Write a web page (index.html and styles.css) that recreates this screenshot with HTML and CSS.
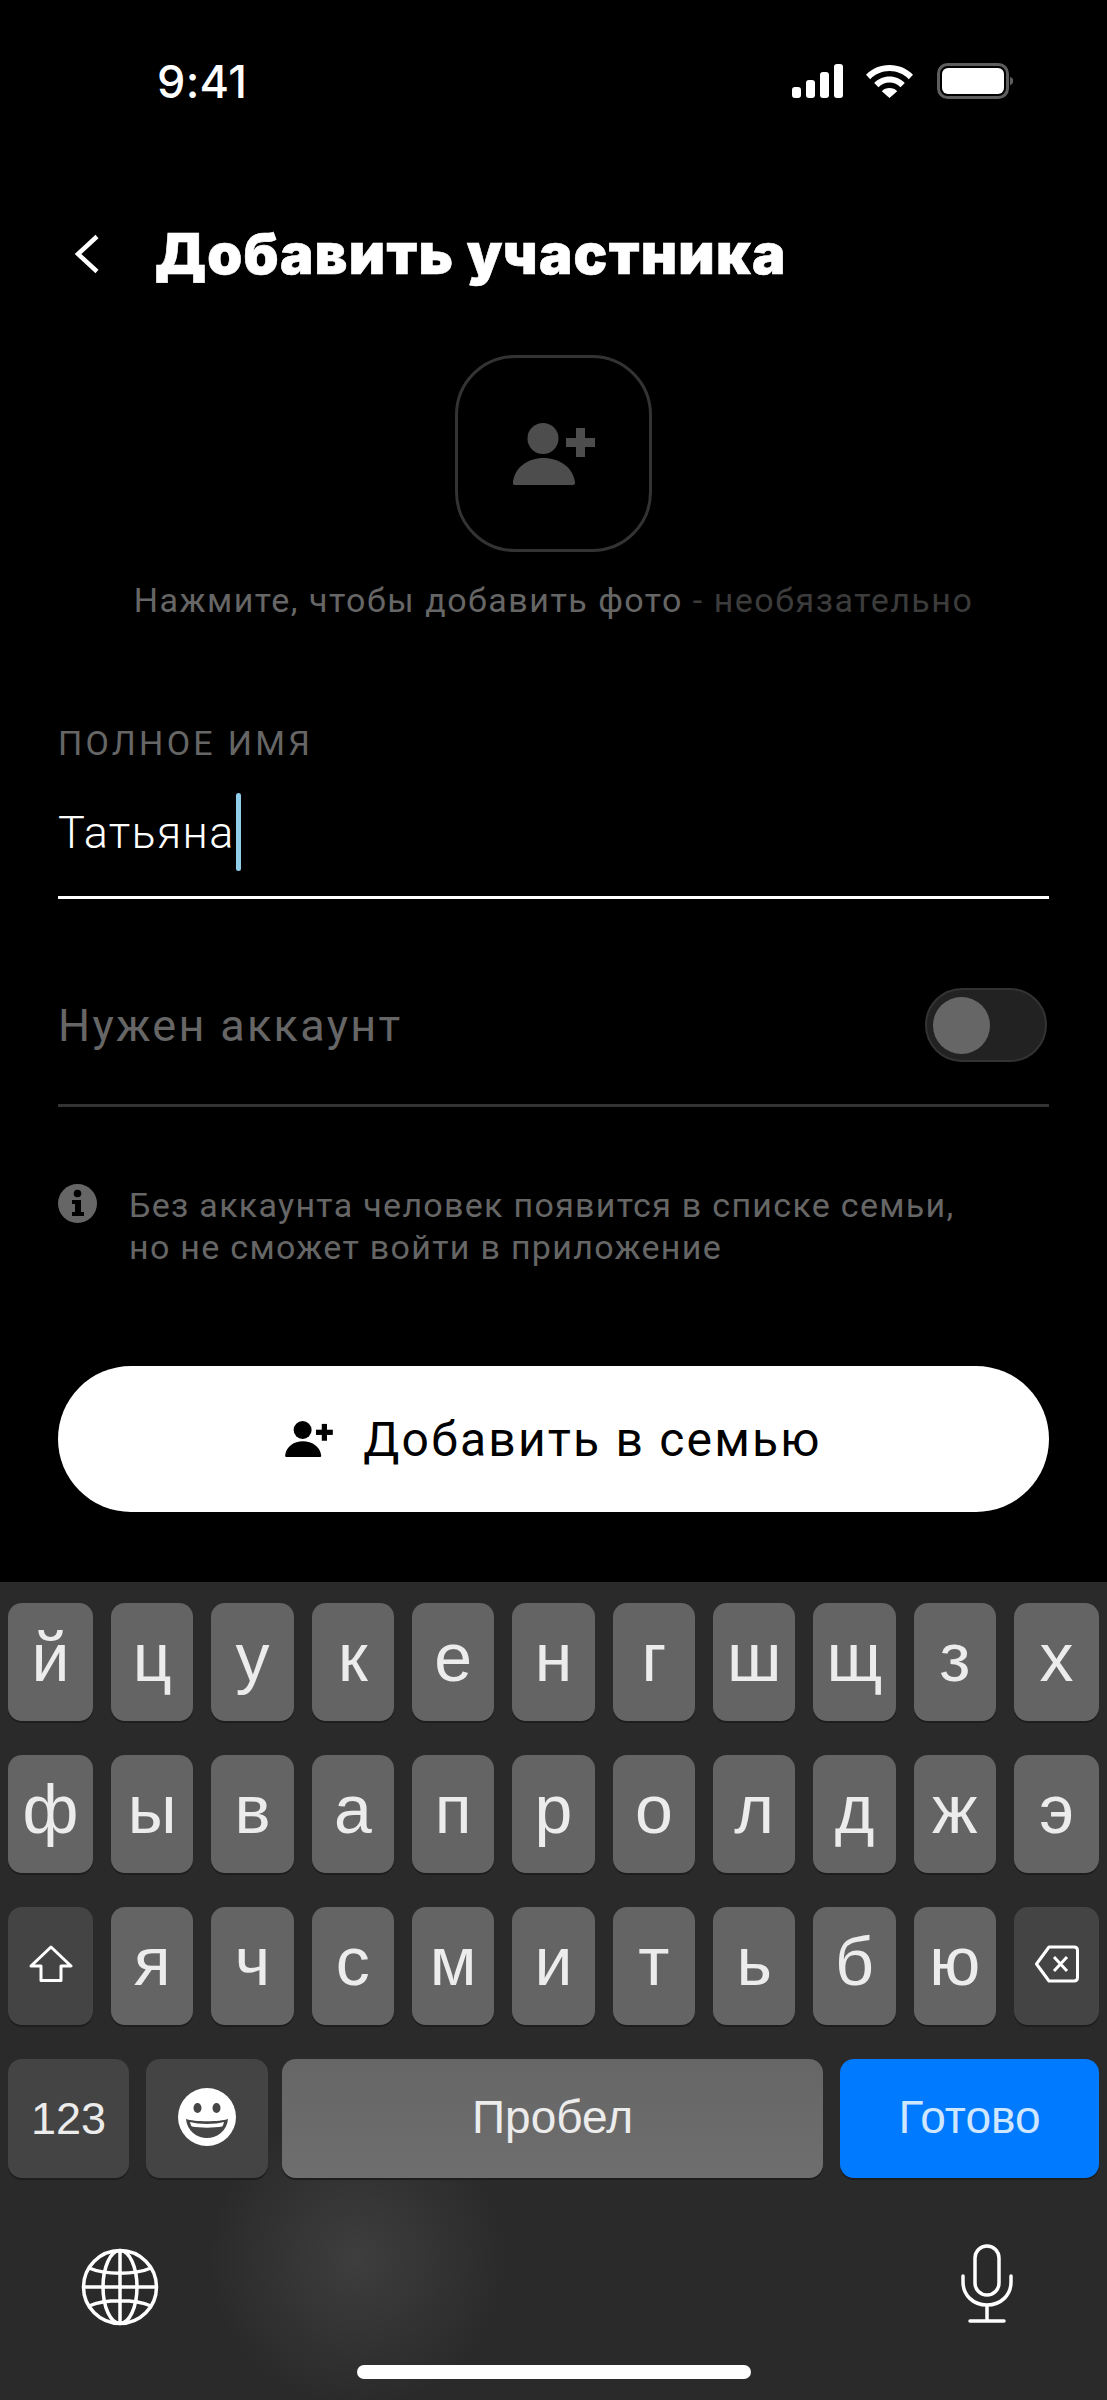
FILE: index.html
```html
<!DOCTYPE html>
<html lang="ru">
<head>
<meta charset="utf-8">
<title>Добавить участника</title>
<link rel="stylesheet" href="styles.css">
</head>
<body>
<div class="screen">
  <div class="status">
    <span class="time">9:41</span>
    <div class="status-icons">
      <svg class="ic-signal" viewBox="0 0 51 34"><rect x="0" y="23" width="9" height="11" rx="3"/><rect x="14" y="16" width="9" height="18" rx="3"/><rect x="28" y="8" width="9" height="26" rx="3"/><rect x="42" y="0" width="9" height="34" rx="3"/></svg>
      <svg class="ic-wifi" viewBox="0 0 47 33"><path d="M23.5 0C33 0 41 3.600 47 9.800L42.800 14.200C37.800 9 31 6 23.500 6S9.200 9 4.200 14.200L0 9.800C6 3.600 14 0 23.500 0Z"/><path d="M23.500 11.500C29.500 11.500 35 14 38.800 18L34.500 22.300C31.700 19.300 27.800 17.500 23.500 17.500S15.300 19.300 12.500 22.300L8.200 18C12 14 17.500 11.500 23.500 11.500Z"/><path d="M23.500 23C26.500 23 29.300 24.200 31.200 26.200L23.500 33L15.800 26.200C17.700 24.200 20.500 23 23.500 23Z"/></svg>
      <svg class="ic-battery" viewBox="0 0 76 36"><rect x="1.500" y="1.500" width="69" height="33" rx="9" fill="none" stroke="#5e5e5e" stroke-width="3"/><rect x="5" y="5" width="62" height="26" rx="6" fill="#fff"/><path d="M73 13.500L76 16V20L73 22.500Z" fill="#5e5e5e"/></svg>
    </div>
  </div>

  <div class="header">
    <svg class="back" viewBox="0 0 26 40"><path d="M23 2.500L4 20L23 37.500" fill="none" stroke="#fff" stroke-width="4.500"/></svg>
    <h1 class="title">Добавить участника</h1>
  </div>

  <div class="avatar">
    <svg class="avatar-icon" viewBox="0 0 82 62"><circle cx="30" cy="15.500" r="15.500"/><path d="M0 59C2 44 15 35 30.500 35C46 35 60 44 62 59Q62.500 62 60 62H2Q-.5 62 0 59Z"/><rect x="53" y="15" width="29" height="9"/><rect x="63" y="5" width="9" height="29"/></svg>
  </div>
  <p class="caption">Нажмите, чтобы добавить фото <span class="caption-dim">- необязательно</span></p>

  <div class="form">
    <div class="label">ПОЛНОЕ ИМЯ</div>
    <div class="input"><span class="input-text">Татьяна</span><span class="caret"></span></div>
    <div class="toggle-row">
      <span class="toggle-label">Нужен аккаунт</span>
      <span class="toggle"><span class="knob"></span></span>
    </div>
    <div class="note">
      <svg class="note-icon" viewBox="0 0 39 39"><circle cx="19.500" cy="19.500" r="19.500" fill="#666"/><circle cx="19.500" cy="9.500" r="3.800" fill="#000"/><path d="M14 16H23V28H26V32H14V28H17V20H14Z" fill="#000"/></svg>
      <p class="note-text">Без аккаунта человек появится в списке семьи,<br>но не сможет войти в приложение</p>
    </div>
    <div class="cta">
      <svg class="cta-icon" viewBox="0 0 82 62"><circle cx="30" cy="15.500" r="15.500"/><path d="M0 59C2 44 15 35 30.500 35C46 35 60 44 62 59Q62.500 62 60 62H2Q-.5 62 0 59Z"/><rect x="53" y="15" width="29" height="9"/><rect x="63" y="5" width="9" height="29"/></svg>
      <span>Добавить в семью</span>
    </div>
  </div>

  <div class="keyboard">
    <div class="row">
      <span class="key">й</span><span class="key">ц</span><span class="key">у</span><span class="key">к</span><span class="key">е</span><span class="key">н</span><span class="key">г</span><span class="key">ш</span><span class="key">щ</span><span class="key">з</span><span class="key">х</span>
    </div>
    <div class="row">
      <span class="key">ф</span><span class="key">ы</span><span class="key">в</span><span class="key">а</span><span class="key">п</span><span class="key">р</span><span class="key">о</span><span class="key">л</span><span class="key">д</span><span class="key">ж</span><span class="key">э</span>
    </div>
    <div class="row">
      <span class="key key-dark"><svg class="ic-shift" viewBox="0 0 44 38"><path d="M22 2L42 21H32V35.500H12V21H2Z" fill="none" stroke="#fff" stroke-width="3" stroke-linejoin="round"/></svg></span>
      <span class="key">я</span><span class="key">ч</span><span class="key">с</span><span class="key">м</span><span class="key">и</span><span class="key">т</span><span class="key">ь</span><span class="key">б</span><span class="key">ю</span>
      <span class="key key-dark"><svg class="ic-delete" viewBox="0 0 44 38"><path d="M14 2H39Q42.500 2 42.500 5.500V32.500Q42.500 36 39 36H14L1.500 19Z" fill="none" stroke="#fff" stroke-width="3" stroke-linejoin="round"/><path d="M19 12L32 26M32 12L19 26" stroke="#fff" stroke-width="3" fill="none"/></svg></span>
    </div>
    <div class="row-bottom">
      <span class="key key-dark key-123">123</span>
      <span class="key key-dark key-emoji"><svg class="ic-emoji" viewBox="0 0 58 58"><circle cx="29" cy="29" r="29" fill="#fff"/><ellipse cx="19.500" cy="20" rx="4" ry="5" fill="#464646"/><ellipse cx="38.500" cy="20" rx="4" ry="5" fill="#464646"/><path d="M8 31C16 34 42 34 50 31C49 43 39 50 29 50S9 43 8 31Z" fill="#464646"/><path d="M12 34C20 36.500 38 36.500 46 34C45.500 36 45 37.500 44.200 38.500C36 40 22 40 13.800 38.500C13 37.500 12.500 36 12 34Z" fill="#fff"/></svg></span>
      <span class="key key-space">Пробел</span>
      <span class="key key-done">Готово</span>
    </div>
    <div class="kb-tools">
      <svg class="ic-globe" viewBox="0 0 78 78"><g fill="none" stroke="#fff" stroke-width="3.500"><circle cx="39" cy="39" r="36.500"/><ellipse cx="39" cy="39" rx="17" ry="36.500"/><path d="M39 2.500V75.500M2.500 39H75.500M8 20C24 27 54 27 70 20M8 58C24 51 54 51 70 58"/></g></svg>
      <svg class="ic-mic" viewBox="0 0 52 80"><g fill="none" stroke="#fff" stroke-width="3.500" stroke-linecap="round"><rect x="14" y="2" width="24" height="49" rx="12"/><path d="M2 32V38C2 51 12 61 26 61S50 51 50 38V32M26 61V77M9 77H43"/></g></svg>
    </div>
    <div class="home-bar"></div>
  </div>
</div>
</body>
</html>
```
FILE: styles.css
```css
* { box-sizing: border-box; }
html, body { margin: 0; padding: 0; background: #000; }
.screen {
  width: 1107px;
  height: 2400px;
  overflow: hidden;
  background: #000;
  font-family: Roboto, "Liberation Sans", sans-serif;
  color: #fff;
  display: flex;
  flex-direction: column;
}
.status {
  height: 162px;
  flex: none;
  display: flex;
  align-items: center;
  justify-content: space-between;
  padding: 0 94px 0 157px;
}
.time { font-family: Inter, sans-serif; font-size: 45px; font-weight: 500; letter-spacing: 0.3px; }
.status-icons { display: flex; align-items: center; }
.ic-signal { width: 51px; height: 34px; fill: #fff; }
.ic-wifi { width: 47px; height: 33px; fill: #fff; margin-left: 23px; }
.ic-battery { width: 76px; height: 36px; margin-left: 24px; }

.header {
  height: 184px;
  flex: none;
  display: flex;
  align-items: center;
  padding-left: 74px;
}
.back { width: 26px; height: 40px; }
.title {
  margin: 0 0 0 55px;
  font-family: Inter, sans-serif;
  font-size: 56px;
  font-weight: 900;
  line-height: 1;
  letter-spacing: 1.3px;
  -webkit-text-stroke: 0.6px #fff;
}
.avatar {
  width: 197px;
  height: 197px;
  flex: none;
  margin: 9px 0 0 455px;
  border: 3px solid #333;
  border-radius: 60px;
  display: flex;
  align-items: center;
  justify-content: center;
}
.avatar-icon { width: 82px; height: 62px; fill: #4d4d4d; }
.caption {
  margin: 28px 0 0;
  height: 40px;
  text-align: center;
  font-size: 34px;
  line-height: 40px;
  letter-spacing: 1.5px;
  color: #666;
}
.caption-dim { color: #3c3c3c; }

.form { padding: 0 58px; }
.label {
  margin-top: 103px;
  height: 40px;
  font-size: 34px;
  line-height: 40px;
  letter-spacing: 3.3px;
  color: #666;
}
.input {
  display: flex;
  align-items: center;
  padding: 30px 0 25px;
  border-bottom: 3px solid #fff;
}
.input-text { font-size: 45px; font-weight: 300; letter-spacing: 1.3px; }
.caret { width: 5px; height: 78px; background: #8fcdea; border-radius: 3px; margin-left: 1px; }
.toggle-row {
  display: flex;
  align-items: center;
  justify-content: space-between;
  padding: 89px 2px 42px 0;
  border-bottom: 3px solid #333;
  height: 208px;
}
.toggle-label { font-size: 45px; letter-spacing: 2.3px; color: #666; }
.toggle {
  width: 122px;
  height: 74px;
  border-radius: 37px;
  background: #222;
  border: 2px solid #333;
  display: flex;
  align-items: center;
  padding-left: 6px;
}
.knob { width: 57px; height: 57px; border-radius: 50%; background: #666; }
.note { display: flex; gap: 32px; margin-top: 77px; }
.note-icon { width: 39px; height: 39px; flex: none; }
.note-text {
  margin: 0;
  font-size: 34px;
  line-height: 42px;
  letter-spacing: 1.3px;
  color: #666;
}
.cta {
  margin-top: 98px;
  height: 146px;
  border-radius: 73px;
  background: #fff;
  color: #000;
  font-size: 48px;
  letter-spacing: 2.2px;
  display: flex;
  align-items: center;
  justify-content: center;
  gap: 30px;
}
.cta-icon { width: 48px; height: 36px; fill: #000; }

.keyboard {
  margin-top: auto;
  height: 818px;
  flex: none;
  padding: 21px 8px 0;
  background: radial-gradient(circle 150px at 357px 676px, #3e3e3e, #2a2a2a);
  font-family: "Liberation Sans", sans-serif;
}
.row {
  display: grid;
  grid-template-columns: 85px repeat(9, 1fr) 85px;
  column-gap: 18px;
  height: 118px;
  margin-bottom: 34px;
}
.row-bottom { display: flex; height: 119px; }
.key {
  display: flex;
  align-items: center;
  justify-content: center;
  background: #646464;
  border-radius: 14px;
  box-shadow: 0 2px 0 #1e1e1e;
  font-size: 68px;
  color: #ececec;
  padding-bottom: 10px;
}
.key-dark { background: #444; padding-bottom: 4px; }
.key-123 { width: 121px; font-size: 45px; padding-bottom: 0; }
.key-emoji { width: 122px; margin-left: 17px; }
.key-space { width: 541px; margin-left: 14px; font-size: 46px; padding-bottom: 4px; background: linear-gradient(#666, #6e6e6e); }
.key-done { width: 259px; margin-left: 17px; background: #007aff; font-size: 46px; color: #cfe6ff; padding-bottom: 4px; }
.ic-shift, .ic-delete { width: 44px; height: 38px; }
.ic-emoji { width: 58px; height: 58px; }
.kb-tools {
  display: flex;
  justify-content: space-between;
  align-items: flex-start;
  padding: 66px 86px 0 73px;
}
.ic-globe { width: 78px; height: 78px; margin-top: 4px; }
.ic-mic { width: 52px; height: 80px; }
.home-bar {
  width: 394px;
  height: 14px;
  border-radius: 7px;
  background: #fff;
  margin: 39px 0 0 349px;
}
```
